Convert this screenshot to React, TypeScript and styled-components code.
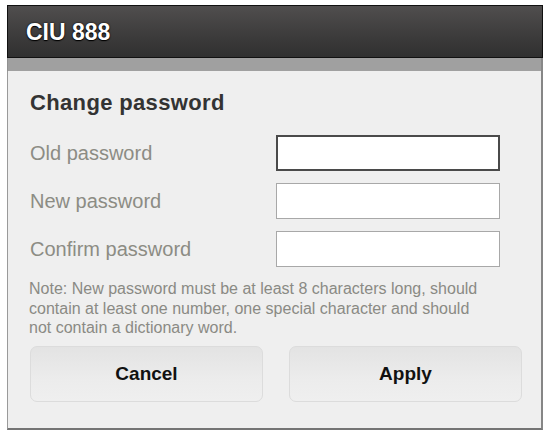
import styled, { createGlobalStyle } from 'styled-components'

const GlobalStyle = createGlobalStyle`
	html, body {
		margin: 0;
		padding: 0;
		background: #ffffff;
	}
	body {
		font-family: 'Liberation Sans', Arial, sans-serif;
	}
`

const Dialog = styled.div`
	width: 536px;
	margin: 5px 0 0 7px;
	display: flex;
	flex-direction: column;
`

const Header = styled.div`
	box-sizing: border-box;
	height: 53px;
	display: flex;
	align-items: center;
	padding: 2px 0 0 18px;
	background: linear-gradient(#504e4e, #3c3b3b 60%, #303030);
	border: 1px solid #111;
`

const Title = styled.h1`
	margin: 0;
	font-size: 23px;
	font-weight: 700;
	color: #ffffff;
	text-shadow: 0 0 2px #000, 0 1px 1px #000;
`

const Band = styled.div`
	height: 13px;
	background: #a0a0a0;
	border-left: 1px solid #909090;
	border-right: 2px solid #888;
	box-sizing: border-box;
`

const Body = styled.div`
	box-sizing: border-box;
	background: #efefef;
	border-left: 1px solid #9a9a9a;
	border-right: 2px solid #868686;
	border-bottom: 2px solid #747474;
	padding: 19px 19px 26px 21px;
`

const Heading = styled.h2`
	margin: 0 0 19px 1px;
	font-size: 22px;
	line-height: 26px;
	letter-spacing: 0.35px;
	font-weight: 700;
	color: #333333;
`

const Fields = styled.div`
	display: grid;
	grid-template-columns: 247px 224px;
	row-gap: 12px;
	align-items: center;
`

const Label = styled.label`
	font-size: 20px;
	color: #8c8c84;
	padding-left: 1px;
`

const Input = styled.input<{ $focused?: boolean }>`
	box-sizing: border-box;
	width: 224px;
	height: 36px;
	margin: 0;
	background: #ffffff;
	border: ${p => (p.$focused ? '2px solid #4a4a4a' : '1px solid #a8a8a8')};
	outline: none;
	padding: 0 6px;
	font-size: 16px;
`

const Note = styled.p`
	margin: 12px 0 8px 0;
	font-size: 16px;
	line-height: 19.5px;
	color: #8a8a84;
`

const Buttons = styled.div`
	display: grid;
	grid-template-columns: 233px 233px;
	column-gap: 26px;
	padding-left: 1px;
`

const Button = styled.button`
	box-sizing: border-box;
	height: 56px;
	border: 1px solid #dcdcdc;
	border-radius: 7px;
	background: linear-gradient(#e3e3e3, #ececec 60%, #efefef);
	font-family: 'Liberation Sans', Arial, sans-serif;
	font-size: 19px;
	font-weight: 700;
	color: #111111;
	cursor: pointer;
`

export default function App() {
	return (
		<>
			<GlobalStyle />
			<Dialog>
				<Header>
					<Title>CIU 888</Title>
				</Header>
				<Band />
				<Body>
					<Heading>Change password</Heading>
					<Fields>
						<Label>Old password</Label>
						<Input type='password' $focused />
						<Label>New password</Label>
						<Input type='password' />
						<Label>Confirm password</Label>
						<Input type='password' />
					</Fields>
					<Note>
						Note: New password must be at least 8 characters long, should
						<br />
						contain at least one number, one special character and should
						<br />
						not contain a dictionary word.
					</Note>
					<Buttons>
						<Button>Cancel</Button>
						<Button>Apply</Button>
					</Buttons>
				</Body>
			</Dialog>
		</>
	)
}
